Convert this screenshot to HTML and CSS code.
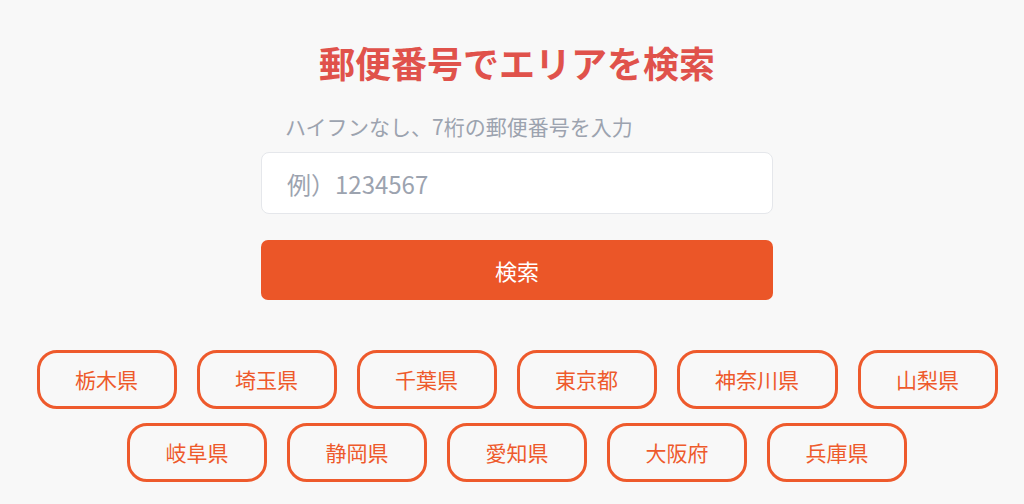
FILE: index.html
```html
<!DOCTYPE html>
<html lang="ja">
<head>
    <meta charset="UTF-8">
    <meta name="viewport" content="width=device-width, initial-scale=1.0">
    <title>郵便番号でエリアを検索</title>
    <link rel="stylesheet" href="styles.css">
</head>
<body>

    <div class="container">
        <h1 class="title">郵便番号でエリアを検索</h1>

        <form class="search-form">
            <label for="zip" class="zip-label">ハイフンなし、7桁の郵便番号を入力</label>
            <input type="text" id="zip" class="zip-input" placeholder="例）1234567">
            <button type="button" class="search-btn">検索</button>
        </form>

        <ul class="areas">
            <li><a class="area" href="#">栃木県</a></li>
            <li><a class="area" href="#">埼玉県</a></li>
            <li><a class="area" href="#">千葉県</a></li>
            <li><a class="area" href="#">東京都</a></li>
            <li><a class="area" href="#">神奈川県</a></li>
            <li><a class="area" href="#">山梨県</a></li>
            <li><a class="area" href="#">岐阜県</a></li>
            <li><a class="area" href="#">静岡県</a></li>
            <li><a class="area" href="#">愛知県</a></li>
            <li><a class="area" href="#">大阪府</a></li>
            <li><a class="area" href="#">兵庫県</a></li>
        </ul>
    </div>

</body>
</html>
```

FILE: styles.css
```css
body {
    font-family: "Noto Sans CJK JP", "Noto Sans", sans-serif;
    background: #f8f8f8;
    color: #333;
    margin: 0;
    padding: 0;
}
.container {
    padding: 41px 0 0 10px;
    display: flex;
    flex-direction: column;
    align-items: center;
}
.title {
    font-size: 36px;
    line-height: 43px;
    font-weight: 700;
    color: #e0524b;
    margin: 0 0 27px;
}
.search-form {
    width: 512px;
    display: flex;
    flex-direction: column;
}
.zip-label {
    font-size: 21px;
    line-height: 30px;
    color: #9ca3af;
    padding-left: 24px;
    margin-bottom: 11px;
}
.zip-input {
    height: 62px;
    box-sizing: border-box;
    padding: 0 25px;
    border: 1px solid #e5e7eb;
    border-radius: 8px;
    background: #fff;
    font-family: inherit;
    font-size: 24px;
    color: #333;
    outline: none;
}
.zip-input::placeholder {
    color: #9ca3af;
}
.search-btn {
    margin-top: 26px;
    height: 60px;
    border: none;
    border-radius: 7px;
    background: #eb5628;
    color: #fff;
    font-family: inherit;
    font-size: 22px;
    cursor: pointer;
}
.areas {
    list-style: none;
    margin: 50px 0 0;
    padding: 0;
    width: 990px;
    display: flex;
    flex-wrap: wrap;
    justify-content: center;
    gap: 14px 20px;
}
.area {
    display: block;
    box-sizing: border-box;
    height: 59px;
    line-height: 53px;
    padding: 0 35.5px;
    border: 3px solid #ee5a2c;
    border-radius: 20px;
    text-align: center;
    text-decoration: none;
    font-size: 21px;
    color: #ee5a2c;
}
```
